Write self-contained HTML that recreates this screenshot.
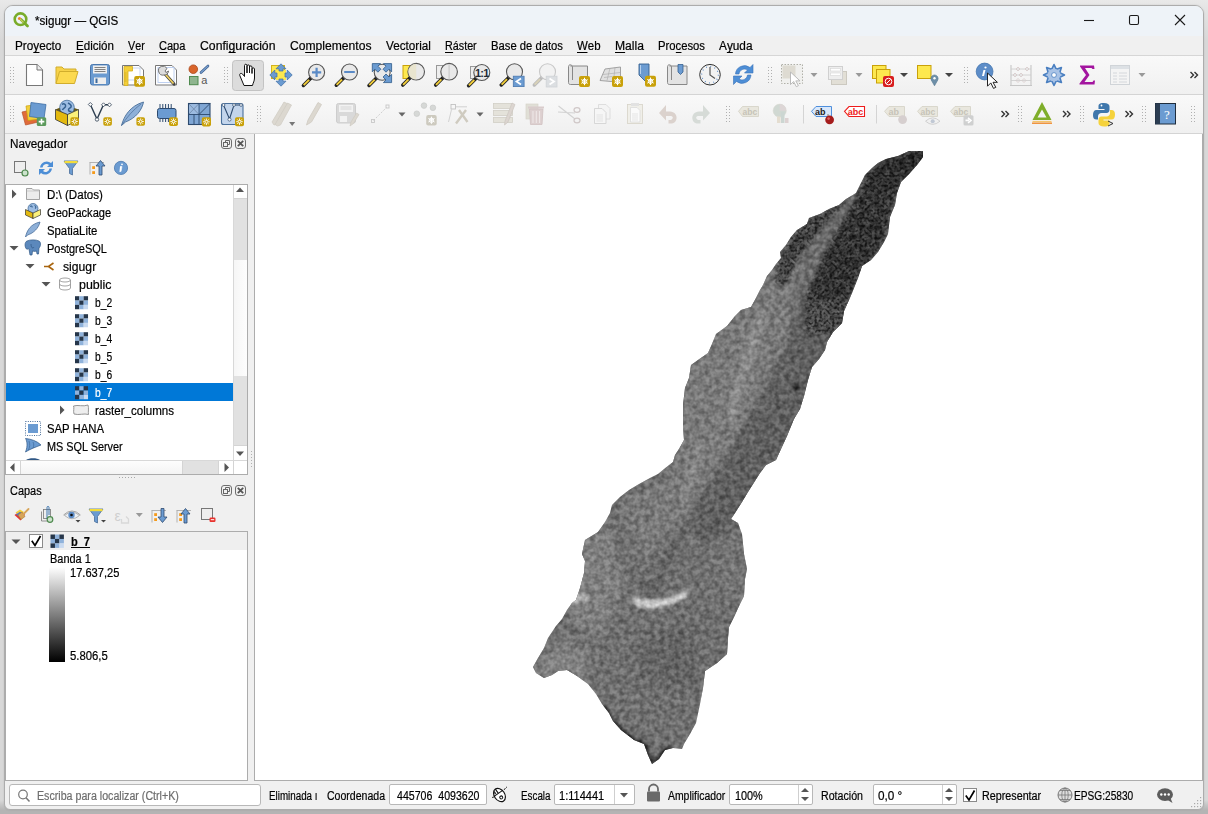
<!DOCTYPE html>
<html><head><meta charset="utf-8"><title>QGIS</title>
<style>
*{margin:0;padding:0;box-sizing:border-box}
html,body{width:1208px;height:814px;overflow:hidden;background:#e9e9e9;font-family:"Liberation Sans",sans-serif;font-size:12px;color:#000}
.a{position:absolute}
.t{position:absolute;line-height:14px;white-space:pre;font-size:12px;transform-origin:0 0;-webkit-text-stroke:.2px currentColor}
u{text-decoration:none;border-bottom:1px solid currentColor;line-height:12px;display:inline-block}
svg{position:absolute;left:0;top:0;overflow:visible}
</style></head><body>
<div class="a" style="left:0;top:0;width:1208px;height:814px;background:linear-gradient(#e9e9e9 0,#e3e3e3 12px,#d8d8d8 40px,#d8d8d8 800px,#b4b4b4 810px)"></div><div class="a" style="left:0;top:810px;width:1208px;height:4px;background:#b4b4b4"></div><div class="a" style="left:4px;top:5px;width:1200px;height:805px;background:#f0f0f0;border:1px solid #acacac;border-radius:9px 9px 6px 6px;box-shadow:0 0 2px rgba(0,0,0,.12)"></div>
<div class="a" style="left:5px;top:6px;width:1198px;height:30px;background:#eef3f8;border-radius:8px 8px 0 0"></div>
<svg width="1208" height="40">
<line x1="1084" y1="20.5" x2="1094" y2="20.5" stroke="#1a1a1a" stroke-width="1.1"/>
<rect x="1129.5" y="15.5" width="9" height="9" rx="1.5" fill="none" stroke="#1a1a1a" stroke-width="1.1"/>
<path d="M1175 15 L1185 25 M1185 15 L1175 25" stroke="#1a1a1a" stroke-width="1.1"/>
</svg>
<div class="a" style="left:5px;top:36px;width:1198px;height:20px;background:#f0f0f0;border-bottom:1px solid #d6d6d6"></div>
<div class="a" style="left:5px;top:56px;width:1198px;height:39px;background:linear-gradient(#f9f9f9,#f0f0f0);border-bottom:1px solid #d4d4d4"></div>
<div class="a" style="left:5px;top:95px;width:1198px;height:39px;background:linear-gradient(#f9f9f9,#f0f0f0);border-bottom:1px solid #d4d4d4"></div>
<div class="a" style="left:221px;top:138px;width:11px;height:11px;border:1px solid #6e6e6e;border-radius:3px"></div>
<div class="a" style="left:235px;top:138px;width:11px;height:11px;border:1px solid #6e6e6e;border-radius:3px"></div>
<div class="a" style="left:221px;top:485px;width:11px;height:11px;border:1px solid #6e6e6e;border-radius:3px"></div>
<div class="a" style="left:235px;top:485px;width:11px;height:11px;border:1px solid #6e6e6e;border-radius:3px"></div>
<svg width="260" height="500">
<rect x="223.5" y="142.5" width="4" height="4" fill="none" stroke="#666"/><path d="M225.5 142.5 V140.5 H229.5 V144.5 H227.5" fill="none" stroke="#666"/>
<path d="M237.8 140.8 L243.2 146.2 M243.2 140.8 L237.8 146.2" stroke="#555" stroke-width="1.8"/>
<rect x="223.5" y="489.5" width="4" height="4" fill="none" stroke="#666"/><path d="M225.5 489.5 V487.5 H229.5 V491.5 H227.5" fill="none" stroke="#666"/>
<path d="M237.8 487.8 L243.2 493.2 M243.2 487.8 L237.8 493.2" stroke="#555" stroke-width="1.8"/>
</svg>
<div class="a" style="left:5px;top:184px;width:243px;height:291px;background:#fff;border:1px solid #acacac"></div>
<div class="a" style="left:6px;top:383px;width:227px;height:18px;background:#0078d7"></div>
<div class="a" style="left:233px;top:185px;width:14px;height:275px;background:#fff;border-left:1px solid #d8d8d8"></div>
<div class="a" style="left:234px;top:198px;width:13px;height:62px;background:#e1e1e1;border-top:1px solid #d4d4d4"></div>
<div class="a" style="left:234px;top:260px;width:13px;height:116px;background:linear-gradient(90deg,#f6f6f6,#fdfdfd)"></div>
<div class="a" style="left:234px;top:376px;width:13px;height:70px;background:#e1e1e1;border-bottom:1px solid #d4d4d4"></div>
<div class="a" style="left:6px;top:460px;width:241px;height:14px;background:#fff;border-top:1px solid #d8d8d8"></div>
<div class="a" style="left:20px;top:461px;width:1px;height:13px;background:#d4d4d4"></div>
<div class="a" style="left:21px;top:461px;width:161px;height:13px;background:linear-gradient(#fdfdfd,#f4f4f4)"></div>
<div class="a" style="left:182px;top:461px;width:37px;height:13px;background:#e1e1e1;border-left:1px solid #d4d4d4;border-right:1px solid #d4d4d4"></div>
<div class="a" style="left:233px;top:461px;width:1px;height:13px;background:#d4d4d4"></div>
<svg width="260" height="500">
<path d="M236 192 L244 192 L240 187.5 Z" fill="#555"/>
<path d="M236 451.5 L244 451.5 L240 456 Z" fill="#555"/>
<path d="M10 467.5 L14.5 463 L14.5 472 Z" fill="#555"/>
<path d="M229 467.5 L224.5 463 L224.5 472 Z" fill="#555"/>
<g fill="#a8a8a8"><rect x="119" y="477" width="1" height="1"/><rect x="122" y="477" width="1" height="1"/><rect x="125" y="477" width="1" height="1"/><rect x="128" y="477" width="1" height="1"/><rect x="131" y="477" width="1" height="1"/><rect x="134" y="477" width="1" height="1"/></g>
<g fill="#b0b0b0"><rect x="251" y="451" width="1" height="1"/><rect x="251" y="454" width="1" height="1"/><rect x="251" y="457" width="1" height="1"/><rect x="251" y="460" width="1" height="1"/><rect x="251" y="463" width="1" height="1"/><rect x="251" y="466" width="1" height="1"/></g>
<path d="M12 189.5 L16.5 194 L12 198.5 Z" fill="#555"/><path d="M9.5 246 L18.5 246 L14 250.5 Z" fill="#555"/><path d="M25.5 264 L34.5 264 L30 268.5 Z" fill="#555"/><path d="M41.5 282 L50.5 282 L46 286.5 Z" fill="#555"/><path d="M60 405.5 L64.5 410 L60 414.5 Z" fill="#555"/></svg>
<div class="a" style="left:5px;top:531px;width:243px;height:250px;background:#fff;border:1px solid #acacac"></div>
<div class="a" style="left:6px;top:532px;width:241px;height:18px;background:#efefef"></div>
<div class="a" style="left:29px;top:534px;width:14px;height:14px;background:#fff;border:1px solid #8a8a8a"></div>
<svg width="260" height="700">
<path d="M11.5 539.5 L20.5 539.5 L16 544 Z" fill="#555"/>
<path d="M31.8 540.8 L35 545.5 L40.5 536" fill="none" stroke="#000" stroke-width="1.7"/>
</svg>
<div class="a" style="left:49px;top:567px;width:16px;height:95px;background:linear-gradient(#fff,#000)"></div>
<div class="a" style="left:254px;top:134px;width:949px;height:647px;background:#fff;border-left:1px solid #acacac;border-bottom:1px solid #acacac;border-right:1px solid #acacac"></div>
<svg width="1208" height="814">
<defs>
<clipPath id="cp"><polygon points="923,151 923,157 917,165 909,174 901,182 897,193 895,205 890,217 888,234 884,242 878,252 871,260 862,266 858,278 852,293 849,300 844,311 842,323 833,332 827,342 825,350 819,359 812,367 808,380 804,396 800,409 794,419 787,436 781,449 776,460 766,465 760,473 748,492 742,502 735,513 731,519 738,523 742,534 744,554 747,569 745,579 744,596 740,604 734,617 729,627 728,638 727,654 717,663 705,671 703,688 700,704 696,723 690,734 684,744 682,749 673,748 665,750 659,759 652,764 648,755 644,744 634,740 621,730 613,721 609,713 602,704 596,694 588,684 577,676 567,670 558,671 552,675 544,678 536,673 533,667 538,658 544,648 548,638 556,626 562,619 567,610 572,603 576,600 580,588 584,573 585,561 582,554 585,540 598,532 605,522 610,513 612,505 620,497 629,490 639,484 650,478 658,474 664,469 673,462 675,455 679,449 684,440 683,426 683,405 685,388 689,378 691,365 698,360 708,353 712,344 716,334 727,326 735,316 741,310 751,307 756,298 760,290 763,285 767,276 772,270 776,264 781,258 780,252 786,245 791,237 797,230 807,224 809,218 820,214 829,209 839,205 846,199 856,193 860,185 865,175 872,168 878,163 886,159 898,156 909,151"/></clipPath>
<filter id="nz" color-interpolation-filters="sRGB" x="530" y="148" width="396" height="620" filterUnits="userSpaceOnUse"><feTurbulence type="fractalNoise" baseFrequency="0.22" numOctaves="2" seed="5"/><feColorMatrix type="matrix" values="1.8 0 0 0 -0.4  1.8 0 0 0 -0.4  1.8 0 0 0 -0.4  0 0 0 0 0.08"/></filter>
<filter id="nzb" color-interpolation-filters="sRGB" x="530" y="148" width="396" height="620" filterUnits="userSpaceOnUse"><feTurbulence type="fractalNoise" baseFrequency="0.2" numOctaves="2" seed="8"/><feColorMatrix type="matrix" values="2.2 0 0 0 -0.55  2.2 0 0 0 -0.55  2.2 0 0 0 -0.55  0 0 0 0 0.17"/></filter>
<filter id="nzd" color-interpolation-filters="sRGB" x="530" y="148" width="396" height="620" filterUnits="userSpaceOnUse"><feTurbulence type="fractalNoise" baseFrequency="0.4" numOctaves="1" seed="11"/><feColorMatrix type="matrix" values="0 0 0 0 0  0 0 0 0 0  0 0 0 0 0  -4 0 0 0 2.2"/></filter>
<filter id="bl" color-interpolation-filters="sRGB" x="-50%" y="-50%" width="200%" height="200%"><feGaussianBlur stdDeviation="5"/></filter>
<filter id="bl3" color-interpolation-filters="sRGB" x="-50%" y="-50%" width="200%" height="200%"><feGaussianBlur stdDeviation="2.5"/></filter>
<filter id="bl2" color-interpolation-filters="sRGB" x="-50%" y="-50%" width="200%" height="200%"><feGaussianBlur stdDeviation="1.5"/></filter>
<mask id="mkd" maskUnits="userSpaceOnUse" x="700" y="140" width="240" height="240"><g filter="url(#bl3)"><polygon points="856,198 865,175 878,163 898,156 909,151 930,146 932,165 909,174 897,193 890,217 884,242 871,260 858,278 849,300 842,323 833,334 806,334 805,300 822,258 842,222" fill="#fff"/><path d="M779 262 L786 245 L797 230 L809 218 L829 209 L846 199 L852 195 L842 206 L820 230 L798 258 L787 283 L775 285 Z" fill="#fff"/></g></mask>
</defs>
<g clip-path="url(#cp)">
<rect x="530" y="148" width="396" height="620" fill="#686868"/>
<g filter="url(#bl)">
<path d="M575 545 L610 525 L625 590 L600 640 L570 620 Z" fill="#7c7c7c"/><path d="M535 665 L560 640 L590 650 L585 680 L545 682 Z" fill="#808080"/><path d="M640 640 L700 620 L720 650 L690 690 L640 680 Z" fill="#5a5a5a"/><path d="M700 540 L745 540 L745 600 L715 610 Z" fill="#6c6c6c"/>
<path d="M670 480 L680 380 L750 300 L775 270 L800 265 L795 300 L785 350 L760 400 L735 445 L710 485 L685 525 L640 560 L620 500 Z" fill="#757575"/>
<path d="M805 300 L855 300 L835 400 L795 450 L745 515 L705 548 L693 522 L718 482 L743 442 L768 397 L793 347 Z" fill="#535353"/>

<path d="M690 620 L740 600 L730 660 L700 700 Z" fill="#656565"/>
</g>
<g filter="url(#bl3)">
<path d="M805 300 L790 345 L765 395 L740 440 L715 480 L690 520 L665 565 L645 610" fill="none" stroke="#464646" stroke-width="4"/>
<polygon points="856,198 865,175 878,163 898,156 909,151 930,146 932,165 909,174 897,193 890,217 884,242 871,260 858,278 849,300 842,323 833,334 806,334 805,300 822,258 842,222" fill="#262626"/><path d="M806 300 L850 300 L835 336 L806 336 Z" fill="#444"/><path d="M850 200 L835 225 L815 252 L798 285 L790 310" fill="none" stroke="#646464" stroke-width="5"/>
<path d="M923 148 L930 160 L905 180 L880 175 L870 168 L890 155 Z" fill="#1c1c1c"/><path d="M779 262 L786 245 L797 230 L809 218 L829 209 L846 199 L852 195 L842 206 L820 230 L798 258 L787 283 L775 285 Z" fill="#3a3a3a"/>

</g>
<g filter="url(#bl2)">
<path d="M632 596 Q660 606 690 588 L687 596 Q660 614 636 606 Z" fill="#dcdcdc"/><path d="M640 580 L655 585 L650 592 L638 588 Z" fill="#555"/>
<path d="M566 597 L585 593 L590 600 L570 604 Z" fill="#bbb"/>
<path d="M760 310 L748 340 L735 380 L725 420 L732 425 L745 385 L758 345 L766 315 Z" fill="#8c8c8c"/><path d="M700 440 L690 470 L680 500 L686 502 L697 472 L706 442 Z" fill="#888"/>
<circle cx="796" cy="387" r="3.6" fill="#0e0e0e"/><path d="M604 706 L612 721 L621 730 L634 740 L644 744 L648 755 L652 764 L659 759 L665 750 L673 748" fill="none" stroke="#141414" stroke-width="5"/>
<circle cx="757" cy="420" r="2" fill="#2a2a2a"/>
</g>
<rect x="530" y="148" width="396" height="620" filter="url(#nz)"/>
<rect x="530" y="520" width="396" height="250" filter="url(#nzb)"/>
<g mask="url(#mkd)"><rect x="700" y="140" width="240" height="240" filter="url(#nzd)" opacity=".6"/></g>
</g>
</svg>
<div class="a" style="left:9px;top:784px;width:252px;height:22px;background:#fff;border:1px solid #b8b8b8;border-radius:3px"></div>
<div class="a" style="left:389px;top:784px;width:98px;height:21px;background:#fff;border:1px solid #b8b8b8;border-radius:2px"></div>
<div class="a" style="left:554px;top:784px;width:81px;height:21px;background:#fff;border:1px solid #b8b8b8;border-radius:2px"></div>
<div class="a" style="left:614px;top:785px;width:1px;height:19px;background:#cfcfcf"></div>
<div class="a" style="left:729px;top:784px;width:84px;height:21px;background:#fff;border:1px solid #b8b8b8;border-radius:2px"></div>
<div class="a" style="left:798px;top:785px;width:1px;height:19px;background:#cfcfcf"></div>
<div class="a" style="left:873px;top:784px;width:84px;height:21px;background:#fff;border:1px solid #b8b8b8;border-radius:2px"></div>
<div class="a" style="left:942px;top:785px;width:1px;height:19px;background:#cfcfcf"></div>
<div class="a" style="left:963px;top:788px;width:14px;height:14px;background:#fff;border:1px solid #8a8a8a"></div>
<svg width="1208" height="814">
<circle cx="23" cy="794.5" r="4.3" fill="none" stroke="#777" stroke-width="1.2"/><path d="M26 797.8 L29.5 801.5" stroke="#777" stroke-width="1.5"/>
<path d="M620 793 L628 793 L624 797.5 Z" fill="#555"/>
<path d="M801 792 L809 792 L805 788 Z M801 797 L809 797 L805 801 Z" fill="#555"/>
<path d="M945 792 L953 792 L949 788 Z M945 797 L953 797 L949 801 Z" fill="#555"/>
<path d="M965.8 795.5 L969 800 L974.5 790.5" fill="none" stroke="#000" stroke-width="1.7"/>
</svg>
<svg width="1208" height="814"><rect x="10" y="67" width="1" height="1" fill="#b0b0b0"/><rect x="13" y="67" width="1" height="1" fill="#b0b0b0"/><rect x="10" y="70" width="1" height="1" fill="#b0b0b0"/><rect x="13" y="70" width="1" height="1" fill="#b0b0b0"/><rect x="10" y="73" width="1" height="1" fill="#b0b0b0"/><rect x="13" y="73" width="1" height="1" fill="#b0b0b0"/><rect x="10" y="76" width="1" height="1" fill="#b0b0b0"/><rect x="13" y="76" width="1" height="1" fill="#b0b0b0"/><rect x="10" y="79" width="1" height="1" fill="#b0b0b0"/><rect x="13" y="79" width="1" height="1" fill="#b0b0b0"/><rect x="10" y="82" width="1" height="1" fill="#b0b0b0"/><rect x="13" y="82" width="1" height="1" fill="#b0b0b0"/><path d="M26.5 64.5 H37 L42.5 70 V85.5 H26.5 Z" fill="#fff" stroke="#777" stroke-width="1.1"/><path d="M37 64.5 V70 H42.5" fill="#eee" stroke="#777" stroke-width="1"/><path d="M56 83.5 V67 H62 L64 69 H76 V72" fill="#f7d24a" stroke="#d1ad2c" stroke-width="1"/><path d="M56 83.5 L59.5 71.5 H78 L74.5 83.5 Z" fill="#fcd94f" stroke="#d1ad2c" stroke-width="1"/><rect x="90.5" y="64.5" width="19" height="20.5" rx="2" fill="#6b9bd1" stroke="#4a78ae"/><rect x="93" y="65.5" width="14" height="8" fill="#f0f0f0"/><path d="M94.5 67.5 H105.5 M94.5 69.5 H105.5 M94.5 71.5 H105.5" stroke="#666" stroke-width=".8"/><rect x="94" y="77.5" width="12" height="6.5" fill="#eee"/><rect x="95.5" y="78.5" width="2" height="4.5" fill="#3d6a9e"/><path d="M122.5 65.5 H139 L143.5 70 V85 H122.5 Z" fill="#fff" stroke="#777"/><rect x="126" y="68" width="14" height="12" fill="none" stroke="#b8ccf0" stroke-width=".8"/><path d="M124 66.5 H132.5 V71 H128 V85.5 H124 Z" fill="#f3cf3a" stroke="#d5ae1c" stroke-width=".8"/><path d="M124.5 73 H126.5 M124.5 75 H126.5 M124.5 77 H126.5 M124.5 79 H126.5 M124.5 81 H126.5" stroke="#b08c10" stroke-width=".5"/><rect x="134.2" y="76" width="10.8" height="10.8" rx="2" fill="#c9a10a"/><path d="M139.60 77.73 L139.60 85.07 M142.78 79.56 L136.42 83.24 M142.78 83.24 L136.42 79.56 " stroke="#fff" stroke-width="1"/><circle cx="139.6" cy="81.4" r="2.2" fill="none" stroke="#fff" stroke-width="1"/><circle cx="139.6" cy="81.4" r=".8" fill="#fff"/><path d="M155.5 65.5 H172 L176.5 70 V85 H155.5 Z" fill="#fff" stroke="#777"/><rect x="158" y="67.5" width="16" height="15" fill="none" stroke="#b8ccf0" stroke-width=".9"/><path d="M162 70.5 L174 84" stroke="#444" stroke-width="3.2" stroke-linecap="round"/><path d="M162.5 71 L173.5 83.5" stroke="#f0d060" stroke-width="1.8"/><path d="M164 75 A4.5 4.5 0 1 1 167 68.5 L165 71 L166 72.5 L168.5 71 A4.5 4.5 0 0 1 164 75 Z" fill="#ddd" stroke="#666" stroke-width=".9"/><circle cx="193.3" cy="69.2" r="4.3" fill="#d9652b" stroke="#a8461a" stroke-width=".8"/><path d="M201 72.5 L208 66" stroke="#3b5e8c" stroke-width="2.6" stroke-linecap="round"/><path d="M201 72.5 L208 66" stroke="#7aa0d0" stroke-width="1.2" stroke-linecap="round"/><rect x="189.5" y="76.5" width="8.5" height="8.2" fill="#8fb58f" stroke="#4f8a4f"/><text x="201.2" y="84" font-family="Liberation Sans" font-size="11" fill="#555">a</text><rect x="224" y="67" width="1" height="1" fill="#b0b0b0"/><rect x="227" y="67" width="1" height="1" fill="#b0b0b0"/><rect x="224" y="70" width="1" height="1" fill="#b0b0b0"/><rect x="227" y="70" width="1" height="1" fill="#b0b0b0"/><rect x="224" y="73" width="1" height="1" fill="#b0b0b0"/><rect x="227" y="73" width="1" height="1" fill="#b0b0b0"/><rect x="224" y="76" width="1" height="1" fill="#b0b0b0"/><rect x="227" y="76" width="1" height="1" fill="#b0b0b0"/><rect x="224" y="79" width="1" height="1" fill="#b0b0b0"/><rect x="227" y="79" width="1" height="1" fill="#b0b0b0"/><rect x="224" y="82" width="1" height="1" fill="#b0b0b0"/><rect x="227" y="82" width="1" height="1" fill="#b0b0b0"/><rect x="232.5" y="60.5" width="31" height="30" rx="3" fill="#dcdcdc" stroke="#c3c3c3"/><path d="M244 85.5 L240 76 C239 74 240.5 72.5 242.5 74 L244.5 76.5 V65.5 C244.5 63.8 247 63.8 247 65.5 V73 V66 C247 64.5 249.5 64.5 249.5 66 V73 V67 C249.5 65.5 252 65.5 252 67 V73.5 V69 C252 67.5 254.5 67.5 254.5 69 V78 C254.5 81 253 83 252.5 85.5 Z" fill="#fff" stroke="#111" stroke-width="1"/><rect x="271.5" y="65.5" width="13" height="13" fill="#fde84e" stroke="#d2b21e"/><rect x="276" y="70" width="10" height="10" fill="#fde84e"/><g fill="#6b9bd1" stroke="#3f6ea6" stroke-width=".7" stroke-linejoin="round"><path d="M281 63.8 L286 68.8 H283 V71 H279 V68.8 H276 Z"/><path d="M281 86.2 L286 81.2 H283 V79 H279 V81.2 H276 Z"/><path d="M269.8 75 L274.8 70 V73 H277 V77 H274.8 V80 Z"/><path d="M292.2 75 L287.2 70 V73 H285 V77 H287.2 V80 Z"/></g><path d="M310.9 78.0 L303.4 85.5" stroke="#222" stroke-width="3.5" stroke-linecap="round"/><path d="M309.1 79.8 L303.7 85.2" stroke="#f3cf3a" stroke-width="1.9"/><circle cx="310.9" cy="78.0" r="1.7" fill="#222"/><circle cx="316.6" cy="72.3" r="8" fill="#e9e9e9" stroke="#555" stroke-width="1.1"/><path d="M312 72.3 H321.2 M316.6 67.7 V76.9" stroke="#5a8ac6" stroke-width="2.2"/><path d="M343.8 77.7 L336.3 85.2" stroke="#222" stroke-width="3.5" stroke-linecap="round"/><path d="M342.0 79.5 L336.6 84.9" stroke="#f3cf3a" stroke-width="1.9"/><circle cx="343.8" cy="77.7" r="1.7" fill="#222"/><circle cx="349.5" cy="72" r="8" fill="#e9e9e9" stroke="#555" stroke-width="1.1"/><path d="M345 72 H354" stroke="#5a8ac6" stroke-width="2.2" stroke-linecap="round"/><path d="M376.5 77.9 L369.0 85.4" stroke="#222" stroke-width="3.5" stroke-linecap="round"/><path d="M374.7 79.7 L369.3 85.1" stroke="#f3cf3a" stroke-width="1.9"/><circle cx="376.5" cy="77.9" r="1.7" fill="#222"/><circle cx="382.2" cy="72.2" r="8" fill="#e9e9e9" stroke="#555" stroke-width="1.1"/><path d="M372.3 63.6 L380.5 63.6 L377.9 66.2 L380.9 69.2 L377.9 72.2 L374.9 69.2 L372.3 71.8 Z" fill="#6b9bd1" stroke="#2f5a8a" stroke-width=".8" stroke-linejoin="round"/><path d="M391.6 63.6 L383.4 63.6 L386.0 66.2 L383.0 69.2 L386.0 72.2 L389.0 69.2 L391.6 71.8 Z" fill="#6b9bd1" stroke="#2f5a8a" stroke-width=".8" stroke-linejoin="round"/><path d="M391.6 82.6 L383.4 82.6 L386.0 80.0 L383.0 77.0 L386.0 74.0 L389.0 77.0 L391.6 74.4 Z" fill="#6b9bd1" stroke="#2f5a8a" stroke-width=".8" stroke-linejoin="round"/><rect x="403" y="65.5" width="8" height="13" fill="#fde84e" stroke="#c9a10a"/><path d="M410.3 77.6 L402.8 85.1" stroke="#222" stroke-width="3.5" stroke-linecap="round"/><path d="M408.5 79.4 L403.1 84.8" stroke="#f3cf3a" stroke-width="1.9"/><circle cx="410.3" cy="77.6" r="1.7" fill="#222"/><circle cx="416.2" cy="71.7" r="8.3" fill="#e9e9e9" stroke="#555" stroke-width="1.1"/><path d="M416.2 63.8 A7.9 7.9 0 0 0 416.2 79.6 Z" fill="#e8e3c8" opacity=".8"/><rect x="436.5" y="65.5" width="6" height="13" fill="#eee" stroke="#999"/><path d="M443.2 77.6 L435.7 85.1" stroke="#222" stroke-width="3.5" stroke-linecap="round"/><path d="M441.4 79.4 L436.0 84.8" stroke="#f3cf3a" stroke-width="1.9"/><circle cx="443.2" cy="77.6" r="1.7" fill="#222"/><circle cx="449.1" cy="71.7" r="8.3" fill="#e9e9e9" stroke="#555" stroke-width="1.1"/><path d="M449.1 64 V79.5" stroke="#bbb" stroke-width=".8"/><rect x="470.5" y="66.5" width="6" height="12" fill="#eee" stroke="#999"/><path d="M476.1 78.2 L468.6 85.7" stroke="#222" stroke-width="3.5" stroke-linecap="round"/><path d="M474.3 80.0 L468.9 85.4" stroke="#f3cf3a" stroke-width="1.9"/><circle cx="476.1" cy="78.2" r="1.7" fill="#222"/><circle cx="481.8" cy="72.5" r="8" fill="#e9e9e9" stroke="#555" stroke-width="1.1"/><text x="481.8" y="76.5" text-anchor="middle" font-family="Liberation Sans" font-weight="bold" font-size="11" letter-spacing="-.8" fill="#1e2a36">1:1</text><path d="M508.8 77.4 L501.3 84.9" stroke="#222" stroke-width="3.5" stroke-linecap="round"/><path d="M507.0 79.2 L501.6 84.6" stroke="#f3cf3a" stroke-width="1.9"/><circle cx="508.8" cy="77.4" r="1.7" fill="#222"/><circle cx="514.5" cy="71.7" r="8" fill="#e9e9e9" stroke="#555" stroke-width="1.1"/><rect x="513.3" y="76.2" width="10.8" height="10.4" fill="#6b9bd1" stroke="#4a78ae" stroke-width=".8"/><path d="M521 78.5 L516.5 81.5 L521 84.5" fill="none" stroke="#fff" stroke-width="1.8"/><path d="M541.8 77.4 L534.3 84.9" stroke="#bbb" stroke-width="3.5" stroke-linecap="round"/><path d="M540.0 79.2 L534.6 84.6" stroke="#d9d2b8" stroke-width="1.9"/><circle cx="541.8" cy="77.4" r="1.7" fill="#bbb"/><circle cx="547.5" cy="71.7" r="8" fill="#f2f2f2" stroke="#c8c8c8" stroke-width="1.1"/><rect x="546.2" y="76.2" width="10.8" height="10.8" fill="#dcdfe2" stroke="#cfd3d6" stroke-width=".8"/><path d="M549.5 78.5 L554 81.5 L549.5 84.5" fill="none" stroke="#fff" stroke-width="1.8"/><path d="M570.5 66 H587.5 V84.5 H570.5 C569 84.5 568.5 83.5 568.5 82.5 V66.5 C568.5 65 570 64.5 571 65 C572 65.5 572.5 66 572.5 67 V80" fill="#e3e3e3" stroke="#888" stroke-width="1"/><rect x="579" y="76" width="11" height="11" rx="2" fill="#c9a10a"/><path d="M584.50 77.76 L584.50 85.24 M587.74 79.63 L581.26 83.37 M587.74 83.37 L581.26 79.63 " stroke="#fff" stroke-width="1"/><circle cx="584.5" cy="81.5" r="2.2" fill="none" stroke="#fff" stroke-width="1"/><circle cx="584.5" cy="81.5" r=".8" fill="#fff"/><path d="M600 80.5 L605 69 L620.5 67 L620.5 80 L611 81.5 Z" fill="#e0e0e0" stroke="#9a9a9a" stroke-width=".9"/><path d="M603 74.5 L620 72.5 M604 77.5 L612 76.5 M610 68 L607 80.5 M615 67.5 L613.5 81" stroke="#aaa" stroke-width=".6"/><rect x="612" y="76" width="11" height="11" rx="2" fill="#c9a10a"/><path d="M617.50 77.76 L617.50 85.24 M620.74 79.63 L614.26 83.37 M620.74 83.37 L614.26 79.63 " stroke="#fff" stroke-width="1"/><circle cx="617.5" cy="81.5" r="2.2" fill="none" stroke="#fff" stroke-width="1"/><circle cx="617.5" cy="81.5" r=".8" fill="#fff"/><path d="M639 64 H649 V84.5 L644 80 L639 75 Z" fill="#6b9bd1" stroke="#35608f" stroke-width=".9"/><path d="M640.5 65 V74" stroke="#b6d0ee" stroke-width="1"/><rect x="645" y="75.8" width="11" height="11" rx="2" fill="#c9a10a"/><path d="M650.50 77.56 L650.50 85.04 M653.74 79.43 L647.26 83.17 M653.74 83.17 L647.26 79.43 " stroke="#fff" stroke-width="1"/><circle cx="650.5" cy="81.3" r="2.2" fill="none" stroke="#fff" stroke-width="1"/><circle cx="650.5" cy="81.3" r=".8" fill="#fff"/><path d="M669.5 66 H687 V84.5 H669.5 C668 84.5 667.5 83.5 667.5 82.5 V66.5 C667.5 65 669 64.5 670 65 C671 65.5 671.5 66 671.5 67 V80" fill="#e3e3e3" stroke="#888" stroke-width="1"/><path d="M678 64.5 H683 V72 L680.5 74.5 L678 72 Z" fill="#6b9bd1" stroke="#35608f" stroke-width=".8"/><circle cx="710" cy="74.7" r="10.3" fill="#f2f2f2" stroke="#333" stroke-width="1"/><circle cx="710" cy="74.7" r="8.3" fill="none" stroke="#5a8ac6" stroke-width="1.2" stroke-dasharray=".9 3.45"/><path d="M710 67 V75 L715 78.5" fill="none" stroke="#555" stroke-width="1.2"/><path d="M735.5 74 A9 9 0 0 1 750 67.5 L753 64.5 V73 H744.5 L747.5 70 A5.5 5.5 0 0 0 739 74 Z" fill="#4d8ed6" stroke="#3a72b8" stroke-width=".6"/><path d="M751 75 A9 9 0 0 1 736.5 81.5 L733.5 84.5 V76 H742 L739 79 A5.5 5.5 0 0 0 747.5 75 Z" fill="#4d8ed6" stroke="#3a72b8" stroke-width=".6"/><rect x="768" y="67" width="1" height="1" fill="#b0b0b0"/><rect x="771" y="67" width="1" height="1" fill="#b0b0b0"/><rect x="768" y="70" width="1" height="1" fill="#b0b0b0"/><rect x="771" y="70" width="1" height="1" fill="#b0b0b0"/><rect x="768" y="73" width="1" height="1" fill="#b0b0b0"/><rect x="771" y="73" width="1" height="1" fill="#b0b0b0"/><rect x="768" y="76" width="1" height="1" fill="#b0b0b0"/><rect x="771" y="76" width="1" height="1" fill="#b0b0b0"/><rect x="768" y="79" width="1" height="1" fill="#b0b0b0"/><rect x="771" y="79" width="1" height="1" fill="#b0b0b0"/><rect x="768" y="82" width="1" height="1" fill="#b0b0b0"/><rect x="771" y="82" width="1" height="1" fill="#b0b0b0"/><rect x="781.5" y="64.5" width="21" height="19" fill="#f0f0ee" stroke="#b0b0a8" stroke-dasharray="1.5 1.5"/><rect x="782.5" y="65.5" width="13" height="13" fill="#dedbd2"/><path d="M790.5 72.0 L790.5 84.6 L793.6 81.5 L796.3 86.7 L798.4 85.7 L795.8 80.9 L800.0 80.9 Z" fill="#fff" stroke="#bbb" stroke-width="1"/><path d="M810.5 73 L817.5 73 L814 77 Z" fill="#999"/><rect x="831.5" y="71.5" width="15" height="13" fill="#e2dfd6" stroke="#ccc9c0"/><rect x="828.5" y="66.5" width="14" height="13" fill="#eee" stroke="#d0d0d0"/><rect x="830.5" y="68.5" width="10" height="2.5" fill="#fff" stroke="#d6d6d6" stroke-width=".6"/><rect x="830.5" y="73" width="10" height="2.5" fill="#fff" stroke="#d6d6d6" stroke-width=".6"/><path d="M855.5 73 L862.5 73 L859 77 Z" fill="#999"/><rect x="872.5" y="65.5" width="13.5" height="13" fill="#fde84e" stroke="#c9a10a"/><rect x="876.5" y="69.5" width="13.5" height="13.5" fill="#fde84e" stroke="#c9a10a"/><rect x="883" y="76" width="11" height="11" rx="2" fill="#d81e1e"/><circle cx="888.5" cy="81.5" r="3.3" fill="none" stroke="#fff" stroke-width="1"/><path d="M886.3 83.7 L890.7 79.3" stroke="#fff" stroke-width="1"/><path d="M900.0 73 L908.0 73 L904 77 Z" fill="#444"/><rect x="917.5" y="65.5" width="13.5" height="13" fill="#fde84e" stroke="#c9a10a"/><path d="M934.5 85.8 L931.2 80 A3.6 3.6 0 1 1 937.8 80 Z" fill="#6d8fa8" stroke="#557891" stroke-width=".6"/><circle cx="934.5" cy="78.2" r="1.2" fill="#fff"/><path d="M945.0 73 L953.0 73 L949 77 Z" fill="#444"/><rect x="964" y="67" width="1" height="1" fill="#b0b0b0"/><rect x="967" y="67" width="1" height="1" fill="#b0b0b0"/><rect x="964" y="70" width="1" height="1" fill="#b0b0b0"/><rect x="967" y="70" width="1" height="1" fill="#b0b0b0"/><rect x="964" y="73" width="1" height="1" fill="#b0b0b0"/><rect x="967" y="73" width="1" height="1" fill="#b0b0b0"/><rect x="964" y="76" width="1" height="1" fill="#b0b0b0"/><rect x="967" y="76" width="1" height="1" fill="#b0b0b0"/><rect x="964" y="79" width="1" height="1" fill="#b0b0b0"/><rect x="967" y="79" width="1" height="1" fill="#b0b0b0"/><rect x="964" y="82" width="1" height="1" fill="#b0b0b0"/><rect x="967" y="82" width="1" height="1" fill="#b0b0b0"/><circle cx="984.6" cy="71.5" r="8.4" fill="#5d8dc8" stroke="#4476b0" stroke-width=".8"/><path d="M983.5 70 H985.5 L984 76 H982" fill="#fff"/><circle cx="985.5" cy="67.5" r="1.1" fill="#fff"/><path d="M987.5 73.0 L987.5 86.2 L990.8 82.9 L993.5 88.4 L995.8 87.3 L993.0 82.3 L997.4 82.3 Z" fill="#fff" stroke="#222" stroke-width="1"/><path d="M1011 65 V85 M1031 65 V85 M1010 85.5 H1032" stroke="#c6c6c6" stroke-width="1.1"/><path d="M1011 69 H1031 M1011 75 H1031 M1011 80.5 H1031" stroke="#ccc" stroke-width=".8"/><g fill="none" stroke="#d6c8c8" stroke-width=".8"><path d="M1018 67 L1020 69 L1018 71 L1016 69 Z M1027 67 L1029 69 L1027 71 L1025 69 Z M1015 73 L1017 75 L1015 77 L1013 75 Z M1021 73 L1023 75 L1021 77 L1019 75 Z M1018 78.5 L1020 80.5 L1018 82.5 L1016 80.5 Z M1024 78.5 L1026 80.5 L1024 82.5 L1022 80.5 Z"/></g><polygon points="1064.50,75.00 1059.73,77.37 1061.42,82.42 1056.37,80.73 1054.00,85.50 1051.63,80.73 1046.58,82.42 1048.27,77.37 1043.50,75.00 1048.27,72.63 1046.58,67.58 1051.63,69.27 1054.00,64.50 1056.37,69.27 1061.42,67.58 1059.73,72.63" fill="#a9c3e6" stroke="#4a7fc0" stroke-width="1.6" stroke-linejoin="round"/><circle cx="1054" cy="75" r="6.3" fill="#a9c3e6"/><circle cx="1054" cy="75" r="2.4" fill="#fff" stroke="#4a7fc0" stroke-width=".8"/><path d="M1080 65.5 H1094 L1094.5 69 H1092.5 L1091.5 68 H1085 L1089.5 75 L1084.5 82 H1092.5 L1093.5 80.5 H1095 L1094.5 84.5 H1079.5 L1079.5 83.5 L1086 75 L1080 66.5 Z" fill="#a3159f"/><rect x="1110.5" y="65.5" width="19" height="19" fill="#f4f4f4" stroke="#d0d4d8"/><rect x="1111" y="66" width="18" height="3" fill="#dde1e5"/><path d="M1113 73 H1117 M1119 73 H1127 M1113 76 H1117 M1119 76 H1127 M1113 79 H1117 M1119 79 H1127 M1113 82 H1117 M1119 82 H1127" stroke="#d0d4d8" stroke-width=".9"/><path d="M1138.5 73 L1145.5 73 L1142 77 Z" fill="#999"/><path d="M1190.5 72 L1193.5 75 L1190.5 78 M1194.5 72 L1197.5 75 L1194.5 78" fill="none" stroke="#333" stroke-width="1.4"/><rect x="10" y="106" width="1" height="1" fill="#b0b0b0"/><rect x="13" y="106" width="1" height="1" fill="#b0b0b0"/><rect x="10" y="109" width="1" height="1" fill="#b0b0b0"/><rect x="13" y="109" width="1" height="1" fill="#b0b0b0"/><rect x="10" y="112" width="1" height="1" fill="#b0b0b0"/><rect x="13" y="112" width="1" height="1" fill="#b0b0b0"/><rect x="10" y="115" width="1" height="1" fill="#b0b0b0"/><rect x="13" y="115" width="1" height="1" fill="#b0b0b0"/><rect x="10" y="118" width="1" height="1" fill="#b0b0b0"/><rect x="13" y="118" width="1" height="1" fill="#b0b0b0"/><rect x="10" y="121" width="1" height="1" fill="#b0b0b0"/><rect x="13" y="121" width="1" height="1" fill="#b0b0b0"/><path d="M22 112 L35 109 L38.5 122 L25.5 125 Z" fill="#e06b3a" stroke="#b8522a" stroke-width=".7"/><path d="M26 106 L38 104.5 L40 119 L28 120.5 Z" fill="#f3cf3a" stroke="#c9a10a" stroke-width=".7"/><path d="M31 102.5 L46 104.5 L44 118.5 L29.5 116.5 Z" fill="#6b9bd1" stroke="#3f6ea6" stroke-width=".8"/><rect x="36.8" y="117.2" width="9.4" height="8.8" rx="1.5" fill="#5c9a5c"/><path d="M41.5 118.8 V124.4 M38.7 121.6 H44.3" stroke="#fff" stroke-width="1.6"/><path d="M55.5 109.5 L66 105 L78.5 109.5 L67.5 114.5 Z" fill="#6b5a10"/><circle cx="67" cy="107.5" r="7.3" fill="#9dbde3" stroke="#35608f" stroke-width=".7"/><path d="M62 104.5 C64 103 66 104.5 65.5 106.5 C65 108 63 108.5 62.5 110 M68 103 C70 104 72 105 71 107 C70 108.5 68.5 108 68.5 110 C68.5 111 70 112 71.5 111" fill="none" stroke="#35608f" stroke-width="1.5"/><path d="M55.5 109.5 L67.5 114.5 V125.5 L55.5 119.5 Z" fill="#e3b90f" stroke="#333" stroke-width=".8" stroke-linejoin="round"/><path d="M67.5 114.5 L78.5 109.5 V120 L67.5 125.5 Z" fill="#fbf07a" stroke="#333" stroke-width=".8" stroke-linejoin="round"/><rect x="70.4" y="117.2" width="8.6" height="8.6" rx="1.8" fill="#c9a10a"/><path d="M71.60 121.50 L77.80 121.50 M72.51 119.31 L76.89 123.69 M74.70 118.40 L74.70 124.60 M76.89 119.31 L72.51 123.69 " stroke="#fff" stroke-width="0.9"/><circle cx="74.7" cy="121.5" r="0.9" fill="#c9a10a"/><path d="M90.3 104.5 L97 119 L103.5 104.8 H109.5" fill="none" stroke="#2d3e50" stroke-width="1.4"/><g fill="#fff" stroke="#2d3e50" stroke-width=".8"><path d="M90.3 102.5 L92.3 104.5 L90.3 106.5 L88.3 104.5 Z"/><path d="M103.5 102.8 L105.5 104.8 L103.5 106.8 L101.5 104.8 Z"/><path d="M109.5 102.8 L111.5 104.8 L109.5 106.8 L107.5 104.8 Z"/><circle cx="97" cy="119.5" r="1.7"/></g><rect x="103.3" y="117.2" width="8.6" height="8.6" rx="1.8" fill="#c9a10a"/><path d="M104.50 121.50 L110.70 121.50 M105.41 119.31 L109.79 123.69 M107.60 118.40 L107.60 124.60 M109.79 119.31 L105.41 123.69 " stroke="#fff" stroke-width="0.9"/><circle cx="107.6" cy="121.5" r="0.9" fill="#c9a10a"/><path d="M121.5 125.5 C124 116 130 106 143.5 102 C142 110 136 118 125.5 122 Z" fill="#8eb0d8" stroke="#4a6f9a" stroke-width=".9"/><path d="M121.5 125.5 C127 117 133 110 141 104" fill="none" stroke="#4a6f9a" stroke-width=".7"/><rect x="136.4" y="117.2" width="8.6" height="8.6" rx="1.8" fill="#c9a10a"/><path d="M137.60 121.50 L143.80 121.50 M138.51 119.31 L142.89 123.69 M140.70 118.40 L140.70 124.60 M142.89 119.31 L138.51 123.69 " stroke="#fff" stroke-width="0.9"/><circle cx="140.70000000000002" cy="121.5" r="0.9" fill="#c9a10a"/><path d="M160 104 V108 M162.8 104 V108 M165.6 104 V108 M168.4 104 V108 M171.2 104 V108 M160 119 V122 M162.8 119 V122 M165.6 119 V122 M168.4 119 V122 M171.2 119 V122" stroke="#2d4a6e" stroke-width="1"/><rect x="157.5" y="108.5" width="18.5" height="10" rx="2" fill="#6b9bd1" stroke="#2d4a6e"/><rect x="169.1" y="117.2" width="8.8" height="8.8" rx="1.8" fill="#c9a10a"/><path d="M170.33 121.60 L176.67 121.60 M171.26 119.36 L175.74 123.84 M173.50 118.43 L173.50 124.77 M175.74 119.36 L171.26 123.84 " stroke="#fff" stroke-width="0.9"/><circle cx="173.5" cy="121.60000000000001" r="0.9" fill="#c9a10a"/><rect x="188.5" y="103.5" width="21.5" height="21" fill="#7fa6d4" stroke="#2d4a6e" stroke-width="1.1"/><path d="M199 103.5 V124.5 M188.5 114.5 H210 M194 114.5 V124.5 M188.5 103.5 L199 114.5 M199 103.5 L188.5 114.5 M210 103.5 L199 114.5" stroke="#2d4a6e" stroke-width=".9"/><rect x="189" y="104" width="9.5" height="10" fill="#b9d0ec" opacity=".5"/><rect x="201.8" y="117.2" width="9.2" height="9.2" rx="1.8" fill="#c9a10a"/><path d="M203.09 121.80 L209.71 121.80 M204.06 119.46 L208.74 124.14 M206.40 118.49 L206.40 125.11 M208.74 119.46 L204.06 124.14 " stroke="#fff" stroke-width="0.9"/><circle cx="206.4" cy="121.8" r="0.9" fill="#c9a10a"/><rect x="221.5" y="103.5" width="21.5" height="21" rx="2" fill="#c3d5ec" stroke="#4a6f9a" stroke-width="1.1"/><path d="M223.5 105 L229.5 119 L234 105 H241" fill="none" stroke="#2d4a6e" stroke-width="1.1"/><g fill="#fff" stroke="#2d4a6e" stroke-width=".7"><circle cx="223.5" cy="105" r="1.4"/><circle cx="234" cy="105" r="1.4"/><circle cx="241" cy="105" r="1.4"/><circle cx="229.5" cy="119.5" r="1.6"/></g><rect x="235" y="117.2" width="9" height="9" rx="1.8" fill="#c9a10a"/><path d="M236.26 121.70 L242.74 121.70 M237.21 119.41 L241.79 123.99 M239.50 118.46 L239.50 124.94 M241.79 119.41 L237.21 123.99 " stroke="#fff" stroke-width="0.9"/><circle cx="239.5" cy="121.7" r="0.9" fill="#c9a10a"/><rect x="257" y="106" width="1" height="1" fill="#b0b0b0"/><rect x="260" y="106" width="1" height="1" fill="#b0b0b0"/><rect x="257" y="109" width="1" height="1" fill="#b0b0b0"/><rect x="260" y="109" width="1" height="1" fill="#b0b0b0"/><rect x="257" y="112" width="1" height="1" fill="#b0b0b0"/><rect x="260" y="112" width="1" height="1" fill="#b0b0b0"/><rect x="257" y="115" width="1" height="1" fill="#b0b0b0"/><rect x="260" y="115" width="1" height="1" fill="#b0b0b0"/><rect x="257" y="118" width="1" height="1" fill="#b0b0b0"/><rect x="260" y="118" width="1" height="1" fill="#b0b0b0"/><rect x="257" y="121" width="1" height="1" fill="#b0b0b0"/><rect x="260" y="121" width="1" height="1" fill="#b0b0b0"/><path d="M272 122 L274 125 L277 124 L288 104 L284 102 Z" fill="#dcd8d0" stroke="#cfcac2" stroke-width=".7"/><path d="M275 124.5 L277.5 126 L280.5 125 L291.5 105 L287.5 103 Z" fill="#dcd8d0" stroke="#cfcac2" stroke-width=".7"/><path d="M289.2 122 L295.2 122 L292.2 126 Z" fill="#777"/><path d="M306.5 125 L308 120 L318 102.5 L321.5 104.5 L311.5 122 Z" fill="#dcd8d0" stroke="#cfcac2" stroke-width=".8"/><rect x="336.5" y="103.5" width="19" height="19.5" rx="2" fill="#d9d9d9" stroke="#cdcdcd"/><rect x="339" y="105" width="14" height="7" fill="#f2f2f2"/><path d="M340.5 107 H351.5 M340.5 109 H351.5" stroke="#ccc" stroke-width=".7"/><rect x="340" y="116" width="7" height="6" fill="#f2f2f2"/><path d="M350 126 L351 122 L356.5 113 L359 114.5 L353.5 123.5 Z" fill="#dcd8d0" stroke="#cfcac2" stroke-width=".7"/><path d="M373.5 120.5 L386.5 107.5" stroke="#d0d0d0" stroke-width="1" stroke-dasharray="2 1.5"/><rect x="371.5" y="119.5" width="3" height="3" fill="none" stroke="#c8c8c8" stroke-width=".9"/><rect x="386" y="105" width="3" height="3" fill="none" stroke="#c8c8c8" stroke-width=".9"/><path d="M398.5 112.5 L405.5 112.5 L402 116.5 Z" fill="#666"/><g fill="#d6d8d6" stroke="#c8cac8" stroke-width=".7"><circle cx="424" cy="105.6" r="2.8"/><circle cx="432.9" cy="107.8" r="2.8"/><circle cx="416.8" cy="113.7" r="2.8"/></g><rect x="426.2" y="115" width="10.5" height="10.5" rx="2" fill="#cdcabf"/><path d="M431.45 116.68 L431.45 123.82 M434.54 118.47 L428.36 122.03 M434.54 122.03 L428.36 118.47 " stroke="#fff" stroke-width="1"/><circle cx="431.45" cy="120.25" r="2.2" fill="none" stroke="#fff" stroke-width="1"/><circle cx="431.45" cy="120.25" r=".8" fill="#fff"/><rect x="451" y="104.5" width="4.5" height="4.5" fill="none" stroke="#bbb" stroke-width=".8"/><path d="M456 106.8 H467 M451.5 109.5 L448.5 122" stroke="#c8c8c8" stroke-width=".8"/><path d="M456 123.5 L466 110 M459 110 L467.5 122" stroke="#cfcbc0" stroke-width="2.4"/><path d="M476.5 112.5 L483.5 112.5 L480 116.5 Z" fill="#666"/><rect x="493.5" y="103.5" width="19" height="5" fill="#e4e2da" stroke="#d2cfc6" stroke-width=".8"/><rect x="493.5" y="110.5" width="19" height="5" fill="#e4e2da" stroke="#d2cfc6" stroke-width=".8"/><rect x="493.5" y="117.5" width="19" height="5" fill="#e4e2da" stroke="#d2cfc6" stroke-width=".8"/><path d="M504.5 125 L505 121 L512 103 L515 104.5 L508 122 Z" fill="#dcd5d0" stroke="#cbc5c0" stroke-width=".7"/><rect x="526" y="104" width="12" height="15" fill="#e0dfd6" stroke="#d6d4ca" stroke-width=".7"/><rect x="528" y="106.5" width="16" height="2" fill="#d9cccc"/><path d="M529.5 109 H543 L542 124.5 H530.5 Z" fill="#ddd0d0" stroke="#d0c2c2" stroke-width=".8"/><path d="M533 111 V123 M536.3 111 V123 M539.6 111 V123" stroke="#f2ecec" stroke-width=".9"/><path d="M558.5 106 L575 119 M558 112 L575 113" stroke="#d2d2d2" stroke-width="1.1"/><ellipse cx="577" cy="110" rx="3" ry="2.3" fill="none" stroke="#d0c8c8" stroke-width="1.2"/><ellipse cx="577" cy="120.5" rx="3" ry="2.3" fill="none" stroke="#d0c8c8" stroke-width="1.2"/><path d="M598.5 104.5 H606 L610 108.5 V119 H598.5 Z" fill="#f4f4f4" stroke="#d8d8d8" stroke-width=".8"/><path d="M594.5 108.5 H602 L606 112.5 V123.5 H594.5 Z" fill="#f6f6f6" stroke="#cfcfcf" stroke-width=".8"/><path d="M596.5 115 H603 M596.5 117 H603 M596.5 119 H603 M596.5 121 H603" stroke="#d8d8d8" stroke-width=".6"/><rect x="627.5" y="104.5" width="15" height="19" fill="#f0efe9" stroke="#d6d3c8" stroke-width=".8"/><rect x="631" y="103" width="8" height="3" fill="#e2e2e2"/><path d="M630.5 107.5 H637 L640 110.5 V122 H630.5 Z" fill="#fafafa" stroke="#d8d8d8" stroke-width=".7"/><path d="M632 114 H638 M632 116 H638 M632 118 H638 M632 120 H638" stroke="#d8d8d8" stroke-width=".6"/><path d="M666 105 L659 113 L666 120.5 V116 H670 C673 116 674 118 671 120 H668.5 V123.5 H672 C678 123 679 112 670 111.5 H666 Z" fill="#dbd2cd"/><path d="M703 105 L710 113 L703 120.5 V116 H699 C696 116 695 118 698 120 H700.5 V123.5 H697 C691 123 690 112 699 111.5 H703 Z" fill="#d6dbd7"/><rect x="726" y="106" width="1" height="1" fill="#b0b0b0"/><rect x="729" y="106" width="1" height="1" fill="#b0b0b0"/><rect x="726" y="109" width="1" height="1" fill="#b0b0b0"/><rect x="729" y="109" width="1" height="1" fill="#b0b0b0"/><rect x="726" y="112" width="1" height="1" fill="#b0b0b0"/><rect x="729" y="112" width="1" height="1" fill="#b0b0b0"/><rect x="726" y="115" width="1" height="1" fill="#b0b0b0"/><rect x="729" y="115" width="1" height="1" fill="#b0b0b0"/><rect x="726" y="118" width="1" height="1" fill="#b0b0b0"/><rect x="729" y="118" width="1" height="1" fill="#b0b0b0"/><rect x="726" y="121" width="1" height="1" fill="#b0b0b0"/><rect x="729" y="121" width="1" height="1" fill="#b0b0b0"/><path d="M738.5 111.3 L742.5 106.5 H758.5 V116.5 H742.5 Z" fill="#e9e7de" stroke="#d3d0c4" stroke-width=".8"/><text x="742.5" y="114.8" font-family="Liberation Sans" font-weight="bold" font-size="8.5" fill="#c6c3b8">abc</text><circle cx="779.7" cy="110.7" r="6.6" fill="#d0d8d2" stroke="#d8d8d0" stroke-width=".5"/><path d="M779.7 110.7 V104.1 A6.6 6.6 0 0 1 786.3 110.7 Z" fill="#ddd6d6"/><rect x="777" y="116.5" width="3.5" height="6.5" fill="#e4ddd0"/><rect x="781" y="112" width="3.5" height="11" fill="#ccd6d2"/><rect x="785" y="118" width="3.5" height="5" fill="#ddd2d2"/><path d="M803.5 105 V123.5" stroke="#d4d4d4" stroke-width="1"/><path d="M811.5 111.3 L816 106.5 H831.5 V116.5 H816 Z" fill="#d9e8fb" stroke="#4f8fdc" stroke-width="1"/><text x="815" y="115" font-family="Liberation Sans" font-weight="bold" font-size="9" fill="#222">ab</text><path d="M828 114 V118" stroke="#aaa" stroke-width="1.6"/><circle cx="829.6" cy="119.8" r="4.4" fill="#a51c1c"/><circle cx="828.6" cy="118.6" r="1.3" fill="#e06060"/><path d="M844.5 111.3 L849 106.5 H864.5 V116.5 H849 Z" fill="#fff" stroke="#ee1c1c" stroke-width="1.1"/><text x="847.8" y="115" font-family="Liberation Sans" font-weight="bold" font-size="9" fill="#ee1c1c">abc</text><path d="M876.5 105 V123.5" stroke="#d4d4d4" stroke-width="1"/><path d="M884.5 111.3 L889 106.5 H904.5 V116.5 H889 Z" fill="#e9e7de" stroke="#d3d0c4" stroke-width=".8"/><text x="888.5" y="115" font-family="Liberation Sans" font-weight="bold" font-size="9" fill="#c6c3b8">ab</text><circle cx="902.6" cy="119.6" r="4.4" fill="#d6cfcf"/><path d="M917.5 111.3 L922 106.5 H937.5 V116.5 H922 Z" fill="#e9e7de" stroke="#d3d0c4" stroke-width=".8"/><text x="920.5" y="115" font-family="Liberation Sans" font-weight="bold" font-size="8.5" fill="#c6c3b8">abc</text><path d="M925.5 121.2 Q932.7 114.5 940 121.2 Q932.7 127.5 925.5 121.2 Z" fill="#f0f0f0" stroke="#c8c8c8" stroke-width=".8"/><circle cx="932.7" cy="121.2" r="2" fill="#c0c8d4"/><path d="M950.5 111.3 L955 106.5 H970.5 V116.5 H955 Z" fill="#e9e7de" stroke="#d3d0c4" stroke-width=".8"/><text x="953.5" y="115" font-family="Liberation Sans" font-weight="bold" font-size="8.5" fill="#c6c3b8">abc</text><rect x="963.5" y="115.3" width="10" height="10.2" rx="1.5" fill="#cfd0d0"/><path d="M965.5 120.4 H969 M968 117.8 L971 120.4 L968 123" stroke="#fff" stroke-width="1.6" fill="none"/><path d="M1001.5 111 L1004.5 114 L1001.5 117 M1005.5 111 L1008.5 114 L1005.5 117" fill="none" stroke="#333" stroke-width="1.4"/><rect x="1018" y="106" width="1" height="1" fill="#b0b0b0"/><rect x="1021" y="106" width="1" height="1" fill="#b0b0b0"/><rect x="1018" y="109" width="1" height="1" fill="#b0b0b0"/><rect x="1021" y="109" width="1" height="1" fill="#b0b0b0"/><rect x="1018" y="112" width="1" height="1" fill="#b0b0b0"/><rect x="1021" y="112" width="1" height="1" fill="#b0b0b0"/><rect x="1018" y="115" width="1" height="1" fill="#b0b0b0"/><rect x="1021" y="115" width="1" height="1" fill="#b0b0b0"/><rect x="1018" y="118" width="1" height="1" fill="#b0b0b0"/><rect x="1021" y="118" width="1" height="1" fill="#b0b0b0"/><rect x="1018" y="121" width="1" height="1" fill="#b0b0b0"/><rect x="1021" y="121" width="1" height="1" fill="#b0b0b0"/><path d="M1042 102 L1051.5 120 H1032.5 Z M1042 109.5 L1037.5 117.5 H1046.5 Z" fill="#7fae2a" fill-rule="evenodd"/><path d="M1032.5 121.5 H1051.5" stroke="#f5c56a" stroke-width="1.2"/><path d="M1032 123.2 H1052" stroke="#ef8a2c" stroke-width="1.4"/><path d="M1063 111 L1066 114 L1063 117 M1067 111 L1070 114 L1067 117" fill="none" stroke="#333" stroke-width="1.4"/><rect x="1080" y="106" width="1" height="1" fill="#b0b0b0"/><rect x="1083" y="106" width="1" height="1" fill="#b0b0b0"/><rect x="1080" y="109" width="1" height="1" fill="#b0b0b0"/><rect x="1083" y="109" width="1" height="1" fill="#b0b0b0"/><rect x="1080" y="112" width="1" height="1" fill="#b0b0b0"/><rect x="1083" y="112" width="1" height="1" fill="#b0b0b0"/><rect x="1080" y="115" width="1" height="1" fill="#b0b0b0"/><rect x="1083" y="115" width="1" height="1" fill="#b0b0b0"/><rect x="1080" y="118" width="1" height="1" fill="#b0b0b0"/><rect x="1083" y="118" width="1" height="1" fill="#b0b0b0"/><rect x="1080" y="121" width="1" height="1" fill="#b0b0b0"/><rect x="1083" y="121" width="1" height="1" fill="#b0b0b0"/><path d="M1104 103 C1098.5 103 1098.5 105 1098.5 107 V109 H1104.5 V110 H1096.5 C1094 110 1093 112 1093 115 C1093 118 1094 119.5 1096.5 119.5 H1098 V116.5 C1098 114.5 1099.5 113 1101.5 113 H1106.5 C1108.5 113 1109.5 111.5 1109.5 109.5 V106.5 C1109.5 104.5 1107.5 103 1104 103 Z" fill="#3f77ac"/><circle cx="1101.5" cy="105.5" r=".9" fill="#fff"/><path d="M1104 126.5 C1109.5 126.5 1109.5 124.5 1109.5 122.5 V120.5 H1103.5 V119.5 H1111.5 C1114 119.5 1115 117.5 1115 114.5 C1115 111.5 1114 110 1111.5 110 H1110 V113 C1110 115 1108.5 116.5 1106.5 116.5 H1101.5 C1099.5 116.5 1098.5 118 1098.5 120 V123 C1098.5 125 1100.5 126.5 1104 126.5 Z" fill="#f5d23c"/><path d="M1108 121 L1113 123.5 L1108 126" fill="none" stroke="#333" stroke-width="1"/><path d="M1125.5 111 L1128.5 114 L1125.5 117 M1129.5 111 L1132.5 114 L1129.5 117" fill="none" stroke="#333" stroke-width="1.4"/><rect x="1142" y="106" width="1" height="1" fill="#b0b0b0"/><rect x="1145" y="106" width="1" height="1" fill="#b0b0b0"/><rect x="1142" y="109" width="1" height="1" fill="#b0b0b0"/><rect x="1145" y="109" width="1" height="1" fill="#b0b0b0"/><rect x="1142" y="112" width="1" height="1" fill="#b0b0b0"/><rect x="1145" y="112" width="1" height="1" fill="#b0b0b0"/><rect x="1142" y="115" width="1" height="1" fill="#b0b0b0"/><rect x="1145" y="115" width="1" height="1" fill="#b0b0b0"/><rect x="1142" y="118" width="1" height="1" fill="#b0b0b0"/><rect x="1145" y="118" width="1" height="1" fill="#b0b0b0"/><rect x="1142" y="121" width="1" height="1" fill="#b0b0b0"/><rect x="1145" y="121" width="1" height="1" fill="#b0b0b0"/><rect x="1155.5" y="103.5" width="20" height="20.5" fill="#6b9bd1" stroke="#1f2d3d" stroke-width="1"/><rect x="1155.5" y="103.5" width="4.5" height="20.5" fill="#2b3d52"/><text x="1164" y="119" font-family="Liberation Serif" font-size="13" fill="#fff">?</text><rect x="1191" y="106" width="1" height="1" fill="#b0b0b0"/><rect x="1194" y="106" width="1" height="1" fill="#b0b0b0"/><rect x="1191" y="109" width="1" height="1" fill="#b0b0b0"/><rect x="1194" y="109" width="1" height="1" fill="#b0b0b0"/><rect x="1191" y="112" width="1" height="1" fill="#b0b0b0"/><rect x="1194" y="112" width="1" height="1" fill="#b0b0b0"/><rect x="1191" y="115" width="1" height="1" fill="#b0b0b0"/><rect x="1194" y="115" width="1" height="1" fill="#b0b0b0"/><rect x="1191" y="118" width="1" height="1" fill="#b0b0b0"/><rect x="1194" y="118" width="1" height="1" fill="#b0b0b0"/><rect x="1191" y="121" width="1" height="1" fill="#b0b0b0"/><rect x="1194" y="121" width="1" height="1" fill="#b0b0b0"/><circle cx="20.5" cy="19.2" r="5.8" fill="none" stroke="#79ac2a" stroke-width="2.6"/><path d="M21 19.5 L27.5 26" stroke="#79ac2a" stroke-width="2.8" stroke-linecap="round"/><circle cx="19.5" cy="18.5" r="1.6" fill="#f0822a"/><path d="M20 19 L23.5 22.5" stroke="#c8d060" stroke-width="1.2"/><rect x="14.5" y="161.5" width="11" height="11" fill="#eee" stroke="#777"/><circle cx="25" cy="173" r="3" fill="#cde3cd" stroke="#4f8a4f" stroke-width="1.2"/><path d="M40 167.5 A6.8 6.8 0 0 1 51 163 L53 161 V167 H47 L49 165 A4 4 0 0 0 42.5 167.5 Z" fill="#4d8ed6"/><path d="M52 168.5 A6.8 6.8 0 0 1 41 173 L39 175 V169 H45 L43 171 A4 4 0 0 0 49.5 168.5 Z" fill="#4d8ed6"/><path d="M64 161 H78 L72.5 168.5 V175 L69.5 173.5 V168.5 Z" fill="#6b9bd1" stroke="#4a6f9a" stroke-width=".8"/><rect x="64.5" y="161" width="13" height="2.2" fill="#f3dc3a"/><path d="M89.5 162.5 H104 M90 162.5 V174.5" stroke="#aaa" stroke-width=".9"/><rect x="92.2" y="166.2" width="2.8" height="2.8" fill="#f59a1a"/><rect x="92.2" y="171.2" width="2.8" height="2.8" fill="#f59a1a"/><path d="M99 175 V166 H96 L100.5 160.5 L105 166 H102 V175 Z" fill="#6b9bd1" stroke="#2d4a6e" stroke-width=".8"/><circle cx="121" cy="167.9" r="6.6" fill="#6b9bd1" stroke="#4a78ae" stroke-width=".8"/><path d="M120 166.5 H122 L121 171.5 H119.5" fill="#fff" stroke="#fff" stroke-width=".6"/><circle cx="122" cy="164.3" r=".9" fill="#fff"/><path d="M14.5 515 L20 511 L25 514 L20.5 520.5 Z" fill="#e8332e"/><path d="M15.5 512.5 L20 509.5 L24 512 L20.5 516 Z" fill="#f3cf3a"/><path d="M16 514.5 L20 511.8 L23.5 514 L20.5 517.5 Z" fill="#4a78c6"/><path d="M21 519.5 L18 515 L22 512 L25 516.5 Z" fill="#d7a55a" stroke="#a8742e" stroke-width=".6"/><path d="M23.5 514 L28.5 509" stroke="#d7a55a" stroke-width="1.8" stroke-linecap="round"/><path d="M41.5 511.5 V521 H50" fill="none" stroke="#777" stroke-width=".8"/><rect x="43.5" y="509.5" width="7" height="9" fill="#eee" stroke="#777" stroke-width=".8"/><path d="M47 519 V507.5 C47 506 49 506 49 507.5 V515" fill="none" stroke="#2d6aa8" stroke-width=".9"/><circle cx="50" cy="519.5" r="2.8" fill="#cde3cd" stroke="#4f8a4f" stroke-width="1.2"/><path d="M63.5 515 Q72 507 80.5 515" fill="none" stroke="#999" stroke-width=".9"/><path d="M64.5 515.5 Q72 522 79.5 515.5 Q72 509 64.5 515.5 Z" fill="#eef2f6" stroke="#999" stroke-width=".7"/><circle cx="71.5" cy="515" r="3.2" fill="#5d8dc8"/><circle cx="71.5" cy="515" r="1.3" fill="#111"/><path d="M75.5 520 H80.5 L78 522.5 Z" fill="#444"/><path d="M89 509 H103 L97.5 516.5 V523 L94.5 521.5 V516.5 Z" fill="#6b9bd1" stroke="#4a6f9a" stroke-width=".8"/><rect x="89.5" y="509" width="13" height="2.2" fill="#f3dc3a"/><path d="M101 520 H106 L103.5 522.5 Z" fill="#444"/><text x="114.5" y="521" font-family="Liberation Sans" font-size="14" fill="#cfcfcf">ε</text><path d="M121.5 519 V523 H128.5 V519 L126 516.5" fill="none" stroke="#d8d8d8" stroke-width="1.3"/><path d="M135.8 513 L142.8 513 L139.3 517 Z" fill="#999"/><path d="M151.5 510.5 H166 M152 510.5 V522.5" stroke="#aaa" stroke-width=".9"/><rect x="154.2" y="513.2" width="2.8" height="2.8" fill="#f59a1a"/><rect x="154.2" y="518.2" width="2.8" height="2.8" fill="#f59a1a"/><path d="M161 508.5 V517 H158 L162.5 522.5 L167 517 H164 V508.5 Z" fill="#6b9bd1" stroke="#2d4a6e" stroke-width=".8"/><path d="M176.5 510.5 H191 M177 510.5 V522.5" stroke="#aaa" stroke-width=".9"/><rect x="179.2" y="513.2" width="2.8" height="2.8" fill="#f59a1a"/><rect x="179.2" y="518.2" width="2.8" height="2.8" fill="#f59a1a"/><path d="M184 523 V514 H181 L185.5 508.5 L190 514 H187 V523 Z" fill="#6b9bd1" stroke="#2d4a6e" stroke-width=".8"/><rect x="201.5" y="508.5" width="11" height="11" fill="#eee" stroke="#777"/><rect x="209.5" y="517.5" width="6" height="4.5" rx="1.2" fill="#e8332e"/><path d="M210.8 519.7 H214.2" stroke="#fff" stroke-width="1"/><path d="M26.5 199.5 V188.5 H32 L33.5 190 H39.5 V199.5 Z" fill="#ececec" stroke="#9a9a9a" stroke-width=".9"/><path d="M26.5 191 H39.5" stroke="#bbb" stroke-width=".6"/><circle cx="33" cy="208.5" r="5" fill="#9dbde3" stroke="#35608f" stroke-width=".7"/><path d="M30 206.5 C31 205.5 32.5 206 32 207.5 M34.5 205.5 C36 206 36.5 207.5 35 208.5" fill="none" stroke="#35608f" stroke-width="1.1"/><path d="M25.5 209.5 L33 213 V218.5 L25.5 215 Z" fill="#e3b90f" stroke="#333" stroke-width=".7" stroke-linejoin="round"/><path d="M33 213 L40.5 209.5 V215 L33 218.5 Z" fill="#fbf07a" stroke="#333" stroke-width=".7" stroke-linejoin="round"/><path d="M25.5 237 C27 230 31 224 40 222 C38.5 228 34 233 27.5 235 Z" fill="#8eb0d8" stroke="#4a6f9a" stroke-width=".8"/><path d="M27 241 C24.5 242 24.5 247 26.5 249 C27.5 250 28 248 29 249 L30 255 H32 L32.5 251 C34 251.5 35.5 251.5 36.5 251 L37 254 H38.5 L39 248 C41 246 41 242 39 241 C36 239.5 30 239.5 27 241 Z" fill="#5b88bc" stroke="#2f5785" stroke-width=".7"/><path d="M31 244 C31 248 33 249 34 247" fill="none" stroke="#2f5785" stroke-width=".7"/><path d="M44 266.5 H48.5 L53.5 263 M48.5 266.5 L53.5 270" fill="none" stroke="#a8650f" stroke-width="1.6"/><ellipse cx="65" cy="280" rx="5.5" ry="2" fill="#fff" stroke="#999" stroke-width=".9"/><path d="M59.5 280 V288 A5.5 2 0 0 0 70.5 288 V280 M59.5 284 A5.5 2 0 0 0 70.5 284" fill="none" stroke="#999" stroke-width=".9"/><rect x="75.00" y="296.20" width="4.38" height="4.38" fill="#26364a"/><rect x="79.33" y="296.20" width="4.38" height="4.38" fill="#8fb2db"/><rect x="83.66" y="296.20" width="4.38" height="4.38" fill="#26364a"/><rect x="75.00" y="300.53" width="4.38" height="4.38" fill="#8fb2db"/><rect x="79.33" y="300.53" width="4.38" height="4.38" fill="#26364a"/><rect x="83.66" y="300.53" width="4.38" height="4.38" fill="#8fb2db"/><rect x="75.00" y="304.86" width="4.38" height="4.38" fill="#26364a"/><rect x="79.33" y="304.86" width="4.38" height="4.38" fill="#8fb2db"/><rect x="83.66" y="304.86" width="4.38" height="4.38" fill="#c9daf0"/><rect x="75.00" y="314.20" width="4.38" height="4.38" fill="#26364a"/><rect x="79.33" y="314.20" width="4.38" height="4.38" fill="#8fb2db"/><rect x="83.66" y="314.20" width="4.38" height="4.38" fill="#26364a"/><rect x="75.00" y="318.53" width="4.38" height="4.38" fill="#8fb2db"/><rect x="79.33" y="318.53" width="4.38" height="4.38" fill="#26364a"/><rect x="83.66" y="318.53" width="4.38" height="4.38" fill="#8fb2db"/><rect x="75.00" y="322.86" width="4.38" height="4.38" fill="#26364a"/><rect x="79.33" y="322.86" width="4.38" height="4.38" fill="#8fb2db"/><rect x="83.66" y="322.86" width="4.38" height="4.38" fill="#c9daf0"/><rect x="75.00" y="332.20" width="4.38" height="4.38" fill="#26364a"/><rect x="79.33" y="332.20" width="4.38" height="4.38" fill="#8fb2db"/><rect x="83.66" y="332.20" width="4.38" height="4.38" fill="#26364a"/><rect x="75.00" y="336.53" width="4.38" height="4.38" fill="#8fb2db"/><rect x="79.33" y="336.53" width="4.38" height="4.38" fill="#26364a"/><rect x="83.66" y="336.53" width="4.38" height="4.38" fill="#8fb2db"/><rect x="75.00" y="340.86" width="4.38" height="4.38" fill="#26364a"/><rect x="79.33" y="340.86" width="4.38" height="4.38" fill="#8fb2db"/><rect x="83.66" y="340.86" width="4.38" height="4.38" fill="#c9daf0"/><rect x="75.00" y="350.20" width="4.38" height="4.38" fill="#26364a"/><rect x="79.33" y="350.20" width="4.38" height="4.38" fill="#8fb2db"/><rect x="83.66" y="350.20" width="4.38" height="4.38" fill="#26364a"/><rect x="75.00" y="354.53" width="4.38" height="4.38" fill="#8fb2db"/><rect x="79.33" y="354.53" width="4.38" height="4.38" fill="#26364a"/><rect x="83.66" y="354.53" width="4.38" height="4.38" fill="#8fb2db"/><rect x="75.00" y="358.86" width="4.38" height="4.38" fill="#26364a"/><rect x="79.33" y="358.86" width="4.38" height="4.38" fill="#8fb2db"/><rect x="83.66" y="358.86" width="4.38" height="4.38" fill="#c9daf0"/><rect x="75.00" y="368.20" width="4.38" height="4.38" fill="#26364a"/><rect x="79.33" y="368.20" width="4.38" height="4.38" fill="#8fb2db"/><rect x="83.66" y="368.20" width="4.38" height="4.38" fill="#26364a"/><rect x="75.00" y="372.53" width="4.38" height="4.38" fill="#8fb2db"/><rect x="79.33" y="372.53" width="4.38" height="4.38" fill="#26364a"/><rect x="83.66" y="372.53" width="4.38" height="4.38" fill="#8fb2db"/><rect x="75.00" y="376.86" width="4.38" height="4.38" fill="#26364a"/><rect x="79.33" y="376.86" width="4.38" height="4.38" fill="#8fb2db"/><rect x="83.66" y="376.86" width="4.38" height="4.38" fill="#c9daf0"/><rect x="75.00" y="386.20" width="4.38" height="4.38" fill="#26364a"/><rect x="79.33" y="386.20" width="4.38" height="4.38" fill="#8fb2db"/><rect x="83.66" y="386.20" width="4.38" height="4.38" fill="#26364a"/><rect x="75.00" y="390.53" width="4.38" height="4.38" fill="#8fb2db"/><rect x="79.33" y="390.53" width="4.38" height="4.38" fill="#26364a"/><rect x="83.66" y="390.53" width="4.38" height="4.38" fill="#8fb2db"/><rect x="75.00" y="394.86" width="4.38" height="4.38" fill="#26364a"/><rect x="79.33" y="394.86" width="4.38" height="4.38" fill="#8fb2db"/><rect x="83.66" y="394.86" width="4.38" height="4.38" fill="#c9daf0"/><path d="M73.5 406 C78 404.5 83 407 88 405 C89 408 88 412 88.5 414.5 C84 413 79 415.5 74 414 C73 411 74.5 408 73.5 406 Z" fill="#eee" stroke="#8a8a8a" stroke-width=".9"/><rect x="25.5" y="421.5" width="15" height="14" fill="none" stroke="#4a6f9a" stroke-width="1" stroke-dasharray="1 1.3"/><rect x="28" y="424" width="10" height="9" fill="#6b9bd1"/><path d="M25.5 452 C28 446 27 441 25.5 438.5 C31 439 37 441 41 445 C36 447 30 449 25.5 452 Z" fill="#6b9bd1" stroke="#2f5785" stroke-width=".7"/><path d="M29 441 C30 444 30 447 28.5 450 M33 442 C34 444 34 446 33 448" stroke="#2f5785" stroke-width=".5" fill="none"/><path d="M26 460 C29 457.5 37 457.5 40 460 Z" fill="#2f5785"/><rect x="50.50" y="534.50" width="4.50" height="4.50" fill="#26364a"/><rect x="54.95" y="534.50" width="4.50" height="4.50" fill="#8fb2db"/><rect x="59.40" y="534.50" width="4.50" height="4.50" fill="#26364a"/><rect x="50.50" y="538.95" width="4.50" height="4.50" fill="#8fb2db"/><rect x="54.95" y="538.95" width="4.50" height="4.50" fill="#26364a"/><rect x="59.40" y="538.95" width="4.50" height="4.50" fill="#8fb2db"/><rect x="50.50" y="543.40" width="4.50" height="4.50" fill="#26364a"/><rect x="54.95" y="543.40" width="4.50" height="4.50" fill="#8fb2db"/><rect x="59.40" y="543.40" width="4.50" height="4.50" fill="#c9daf0"/><g transform="rotate(-35 499.5 795)"><ellipse cx="499.5" cy="795" rx="5.2" ry="7.2" fill="#fff" stroke="#111" stroke-width="1.2"/><path d="M494.3 793 H504.7 M499.5 787.8 V793" stroke="#111" stroke-width="1.1"/><path d="M497 788.5 L497 792" stroke="#333" stroke-width="1.5"/><circle cx="499.5" cy="798" r="1.5" fill="none" stroke="#111" stroke-width="1"/></g><path d="M504 790 L505.5 788 M506 787.5 L507 787" stroke="#222" stroke-width=".9"/><path d="M492 797.5 L494 797" stroke="#222" stroke-width=".9"/><path d="M649 791.5 V789 A4.5 4.5 0 0 1 658 789 V791.5" fill="none" stroke="#6a6a6a" stroke-width="1.8"/><rect x="647" y="791.5" width="13" height="10" rx="1" fill="#6a6a6a"/><circle cx="1065" cy="795" r="7" fill="#ddd" stroke="#777" stroke-width="1"/><path d="M1058 795 H1072 M1065 788 V802 M1060 790.5 H1070 M1060 799.5 H1070" stroke="#777" stroke-width=".8"/><ellipse cx="1065" cy="795" rx="3.2" ry="7" fill="none" stroke="#777" stroke-width=".8"/><ellipse cx="1165" cy="794.6" rx="8" ry="6.3" fill="#5c5c5c"/><path d="M1166 799 L1172.5 803 L1170.5 798 Z" fill="#5c5c5c"/><circle cx="1161.3" cy="794.5" r="1.2" fill="#fff"/><circle cx="1165" cy="794.5" r="1.2" fill="#fff"/><circle cx="1168.7" cy="794.5" r="1.2" fill="#fff"/><rect x="1200" y="797" width="1.2" height="1.2" fill="#aaa"/><rect x="1197" y="800" width="1.2" height="1.2" fill="#aaa"/><rect x="1200" y="800" width="1.2" height="1.2" fill="#aaa"/><rect x="1194" y="803" width="1.2" height="1.2" fill="#aaa"/><rect x="1197" y="803" width="1.2" height="1.2" fill="#aaa"/><rect x="1200" y="803" width="1.2" height="1.2" fill="#aaa"/><rect x="1191" y="806" width="1.2" height="1.2" fill="#aaa"/><rect x="1194" y="806" width="1.2" height="1.2" fill="#aaa"/><rect x="1197" y="806" width="1.2" height="1.2" fill="#aaa"/><rect x="1200" y="806" width="1.2" height="1.2" fill="#aaa"/></svg>
<div class="t" style="left:35px;top:14px;transform:scaleX(0.969)">*sigugr — QGIS</div>
<div class="t" style="left:15px;top:39px;transform:scaleX(0.979)">Pro<u>y</u>ecto</div>
<div class="t" style="left:76px;top:39px;transform:scaleX(0.965)"><u>E</u>dición</div>
<div class="t" style="left:128.3px;top:39px;transform:scaleX(0.894)"><u>V</u>er</div>
<div class="t" style="left:159px;top:39px;transform:scaleX(0.920)"><u>C</u>apa</div>
<div class="t" style="left:200.3px;top:39px;transform:scaleX(1.019)">Confi<u>g</u>uración</div>
<div class="t" style="left:290.4px;top:39px;transform:scaleX(1.010)">Co<u>m</u>plementos</div>
<div class="t" style="left:385.8px;top:39px;transform:scaleX(0.975)">Vect<u>o</u>rial</div>
<div class="t" style="left:445.3px;top:39px;transform:scaleX(0.897)"><u>R</u>áster</div>
<div class="t" style="left:491px;top:39px;transform:scaleX(0.938)">Base de <u>d</u>atos</div>
<div class="t" style="left:577px;top:39px;transform:scaleX(0.952)"><u>W</u>eb</div>
<div class="t" style="left:615px;top:39px;transform:scaleX(1.011)"><u>M</u>alla</div>
<div class="t" style="left:658px;top:39px;transform:scaleX(0.939)">Pro<u>c</u>esos</div>
<div class="t" style="left:719px;top:39px;transform:scaleX(0.984)">A<u>y</u>uda</div>
<div class="t" style="left:9.7px;top:137px;transform:scaleX(0.976)">Navegador</div>
<div class="t" style="left:47px;top:187.5px;transform:scaleX(0.964)">D:\ (Datos)</div>
<div class="t" style="left:47px;top:205.5px;transform:scaleX(0.925)">GeoPackage</div>
<div class="t" style="left:47px;top:223.5px;transform:scaleX(0.944)">SpatiaLite</div>
<div class="t" style="left:47px;top:241.5px;transform:scaleX(0.916)">PostgreSQL</div>
<div class="t" style="left:63px;top:259.5px;transform:scaleX(1.016)">sigugr</div>
<div class="t" style="left:79px;top:277.5px;transform:scaleX(1.033)">public</div>
<div class="t" style="left:95px;top:295.5px;transform:scaleX(0.854)">b_2</div>
<div class="t" style="left:95px;top:313.5px;transform:scaleX(0.854)">b_3</div>
<div class="t" style="left:95px;top:331.5px;transform:scaleX(0.854)">b_4</div>
<div class="t" style="left:95px;top:349.5px;transform:scaleX(0.854)">b_5</div>
<div class="t" style="left:95px;top:367.5px;transform:scaleX(0.854)">b_6</div>
<div class="t" style="left:95px;top:385.5px;color:#fff;transform:scaleX(0.854)">b_7</div>
<div class="t" style="left:95px;top:403.5px;transform:scaleX(0.963)">raster_columns</div>
<div class="t" style="left:47px;top:421.5px;transform:scaleX(0.944)">SAP HANA</div>
<div class="t" style="left:47px;top:439.5px;transform:scaleX(0.906)">MS SQL Server</div>
<div class="t" style="left:9.7px;top:484px;transform:scaleX(0.911)">Capas</div>
<div class="t" style="left:71px;top:534.5px;font-weight:bold;text-decoration:underline;transform:scaleX(0.918)">b_7</div>
<div class="t" style="left:49.5px;top:552px;transform:scaleX(0.912)">Banda 1</div>
<div class="t" style="left:70px;top:565.5px;transform:scaleX(0.925)">17.637,25</div>
<div class="t" style="left:70px;top:648.6px;transform:scaleX(0.944)">5.806,5</div>
<div class="t" style="left:37.2px;top:789px;color:#6d6d6d;transform:scaleX(0.888)">Escriba para localizar (Ctrl+K)</div>
<div class="t" style="left:269px;top:789px;transform:scaleX(0.817)">Eliminada ı</div>
<div class="t" style="left:326.5px;top:789px;transform:scaleX(0.879)">Coordenada</div>
<div class="t" style="left:396.5px;top:789px;transform:scaleX(0.883)">445706  4093620</div>
<div class="t" style="left:520.5px;top:789px;transform:scaleX(0.819)">Escala</div>
<div class="t" style="left:558.6px;top:789px;transform:scaleX(0.919)">1:114441</div>
<div class="t" style="left:667.7px;top:789px;transform:scaleX(0.868)">Amplificador</div>
<div class="t" style="left:734.6px;top:789px;transform:scaleX(0.905)">100%</div>
<div class="t" style="left:821px;top:789px;transform:scaleX(0.887)">Rotación</div>
<div class="t" style="left:877.6px;top:789px;transform:scaleX(0.979)">0,0 °</div>
<div class="t" style="left:981.6px;top:789px;transform:scaleX(0.896)">Representar</div>
<div class="t" style="left:1073.9px;top:789px;transform:scaleX(0.846)">EPSG:25830</div>
</body></html>
